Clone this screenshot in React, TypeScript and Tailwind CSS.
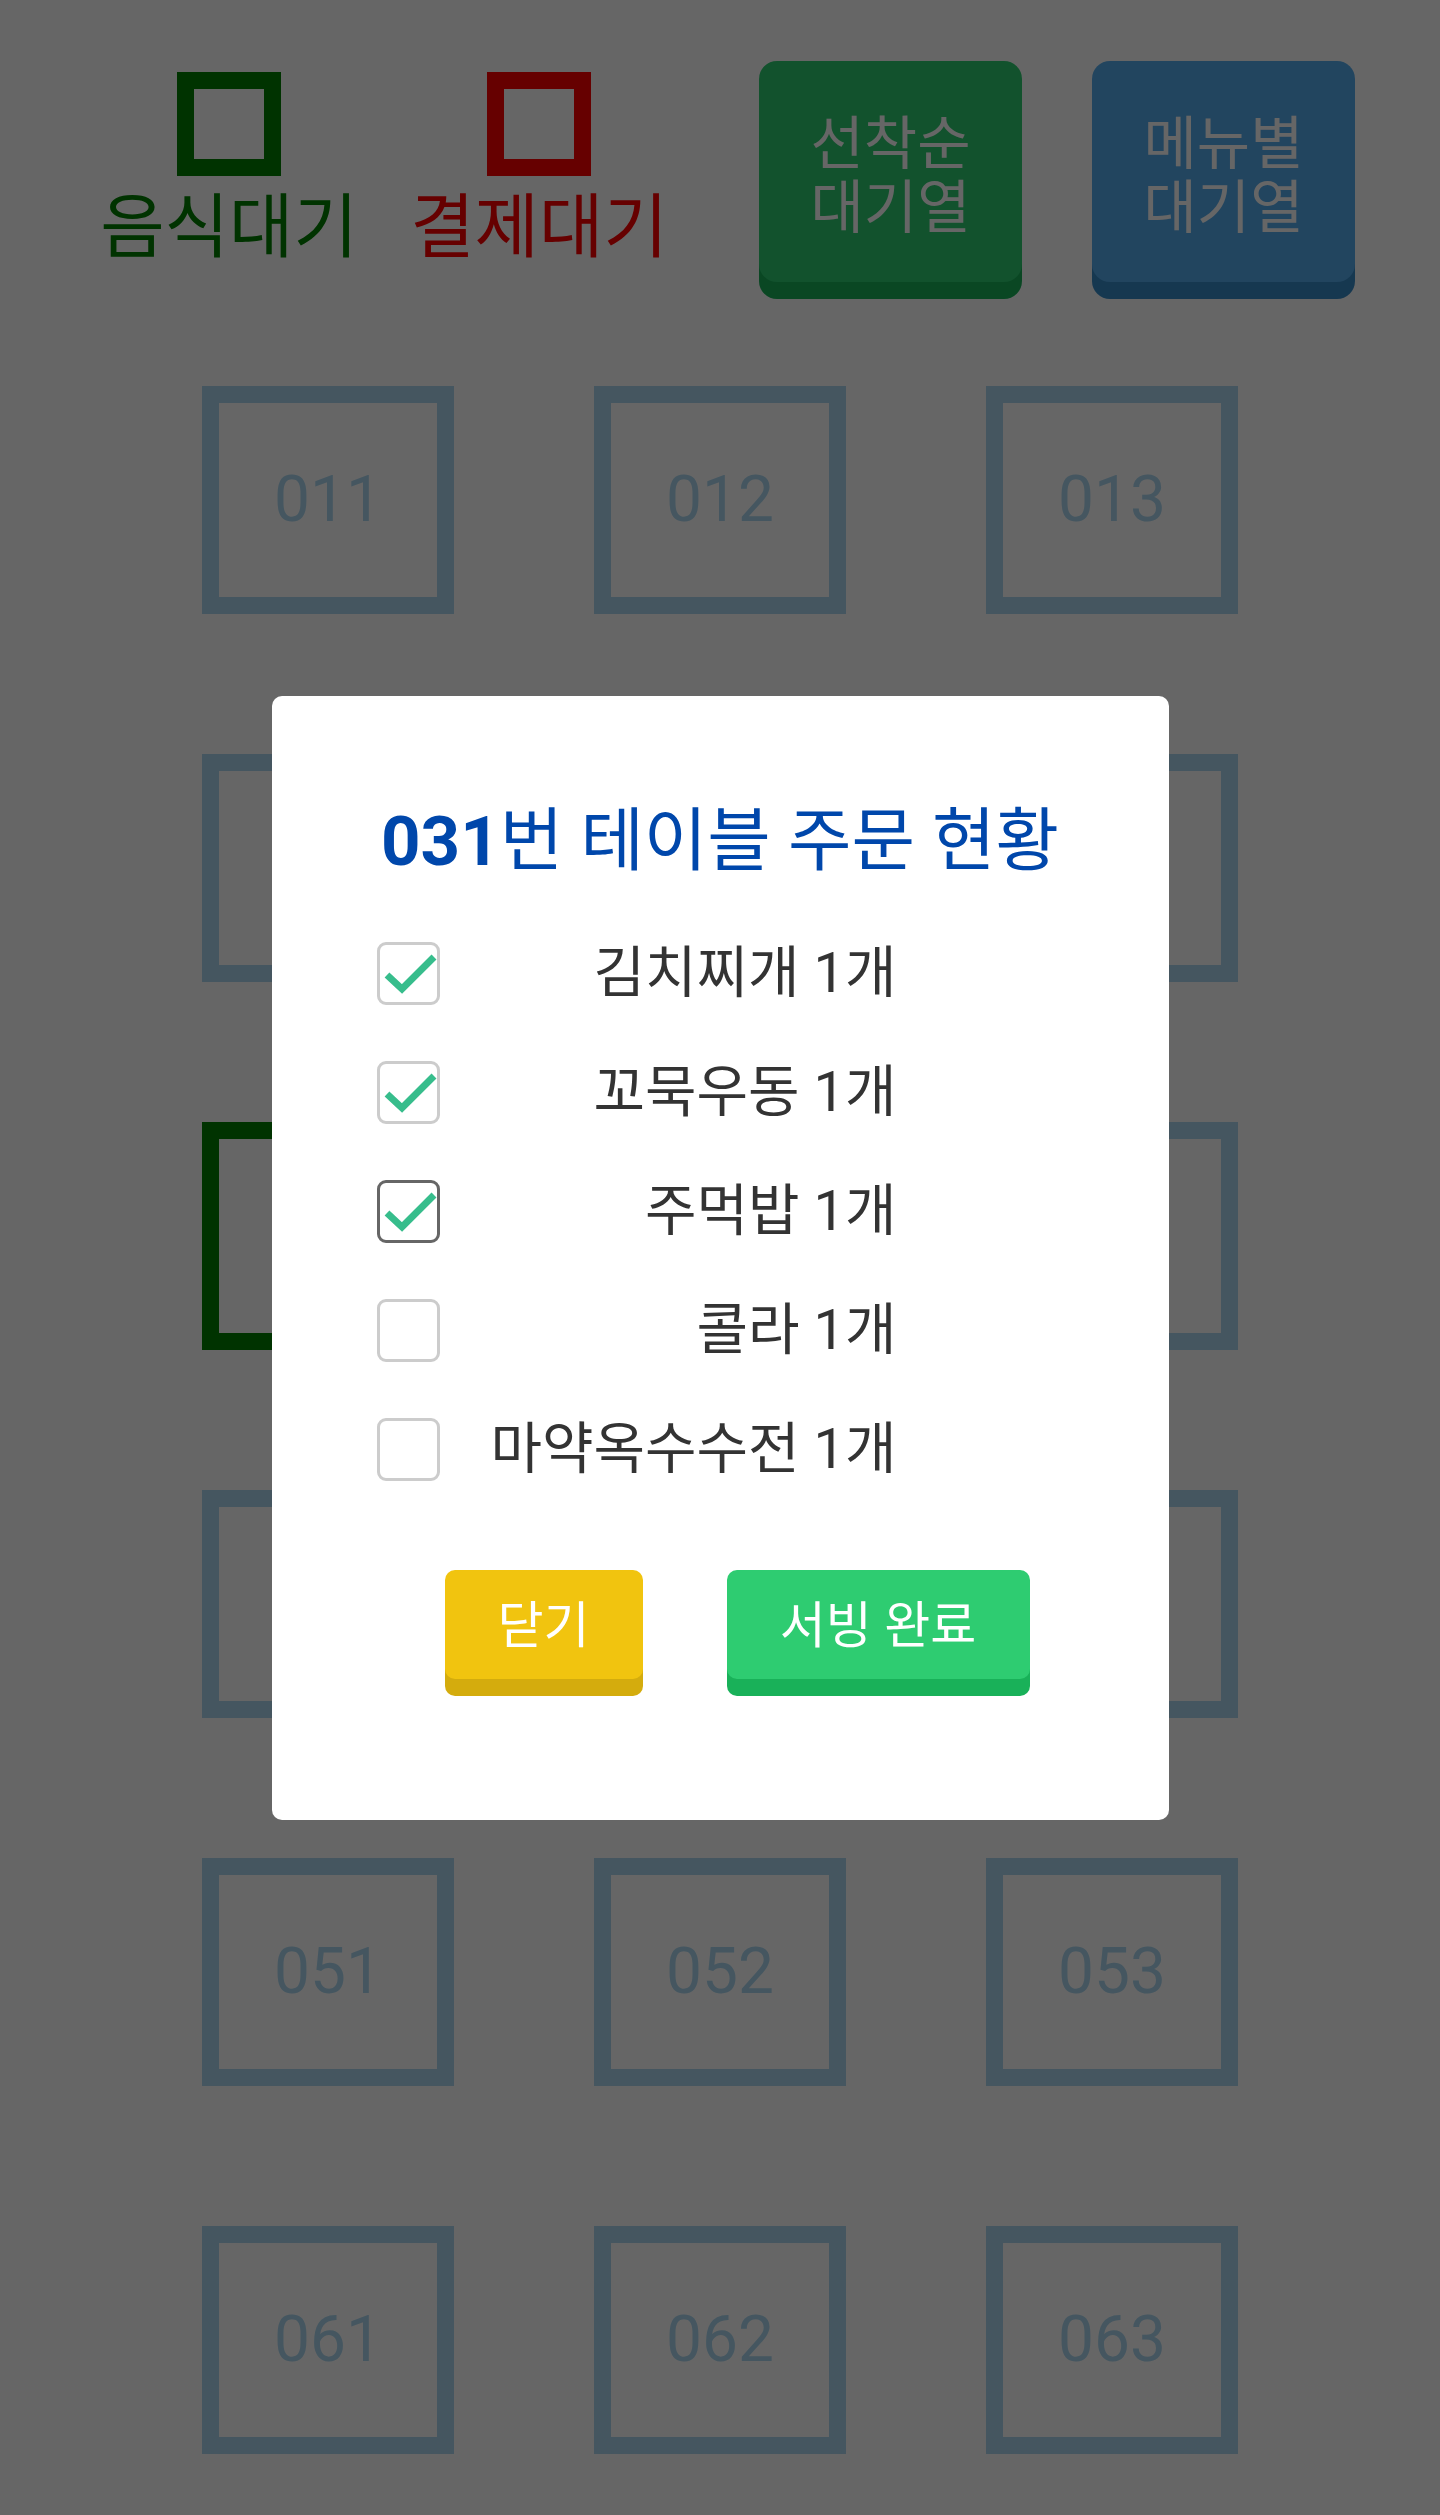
import React from 'react';

const tables = [
  ['011', '012', '013'],
  ['021', '022', '023'],
  ['031', '032', '033'],
  ['041', '042', '043'],
  ['051', '052', '053'],
  ['061', '062', '063'],
];

const orders = [
  { name: '김치찌개 1개', done: true },
  { name: '꼬묵우동 1개', done: true },
  { name: '주먹밥 1개', done: true, focused: true },
  { name: '콜라 1개', done: false },
  { name: '마약옥수수전 1개', done: false },
];

const Legend = ({ label, boxClass, textClass, className }: { label: string; boxClass: string; textClass: string; className: string }) => (
  <div className={`flex w-[256px] flex-col items-center mt-[11px] ${className}`}>
    <div className={`size-[104px] border-[17px] ${boxClass}`} />
    <div className={`mt-[17px] whitespace-nowrap text-[70px] leading-[70px] ${textClass}`}>{label}</div>
  </div>
);

const CheckBox = ({ checked, focused }: { checked: boolean; focused?: boolean }) => (
  <div
    className={`size-[63px] shrink-0 rounded-[9px] border-[3px] bg-white ${focused ? 'border-[#666666]' : 'border-[#cccccc]'}`}
  >
    {checked && (
      <svg viewBox="0 0 57 57" className="size-full">
        <polyline points="7,30 22,44 54,12" fill="none" stroke="#37bd8c" strokeWidth="7" strokeLinejoin="miter" />
      </svg>
    )}
  </div>
);

export default function App() {
  return (
    <div className="relative min-h-[2515px] bg-white pb-[61px] font-[Roboto,'Noto_Sans_CJK_KR',sans-serif]">
      {/* 상단 범례 + 대기열 버튼 */}
      <div className="flex items-start pt-[61px]">
        <Legend label="음식대기" boxClass="border-[#008000]" textClass="text-[#008000]" className="ml-[101px]" />
        <Legend label="결제대기" boxClass="border-[#ff0000]" textClass="text-[#ff0000]" className="ml-[54px]" />
        <button className="ml-[92px] flex h-[221px] w-[263px] items-center justify-center rounded-[18px] bg-[#2ecc71] pt-[8px] text-[58px] leading-[64px] text-white shadow-[0_17px_0_#19b159]">
          선착순
          <br />
          대기열
        </button>
        <button className="ml-[70px] flex h-[221px] w-[263px] items-center justify-center rounded-[18px] bg-[#55acee] pt-[8px] text-[58px] leading-[64px] text-white shadow-[0_17px_0_#398cc8]">
          메뉴별
          <br />
          대기열
        </button>
      </div>

      {/* 테이블 목록 */}
      <div className="mt-[104px] grid grid-cols-[repeat(3,252px)] justify-center gap-[140px]">
        {tables.flat().map((t) => (
          <div
            key={t}
            className={`flex h-[228px] items-center justify-center border-[17px] text-[64px] ${
              t === '031' ? 'border-[#008000] text-[#008000]' : 'border-[#acd8f0] text-[#acd8f0]'
            }`}
          >
            {t}
          </div>
        ))}
      </div>

      {/* 주문 현황 모달 */}
      <div className="fixed inset-0 flex items-center justify-center bg-black/60">
        <div className="flex h-[1124px] w-[897px] flex-col rounded-[10px] bg-white pt-[106px]">
          <h2 className="text-center text-[69px] leading-[80px] font-normal text-[#0047ab]">
            <span className="font-bold">031</span>번 테이블 주문 현황
          </h2>

          <div className="mt-[60px] flex flex-col gap-[56px] pl-[105px]">
            {orders.map((o) => (
              <label key={o.name} className="flex h-[63px] items-center">
                <CheckBox checked={o.done} focused={o.focused} />
                <span className="w-[457px] whitespace-nowrap text-right text-[56px] leading-[63px] text-[#333333]">{o.name}</span>
              </label>
            ))}
          </div>

          <div className="mt-[89px] flex gap-[84px] pl-[173px]">
            <button className="h-[109px] w-[198px] rounded-[10px] bg-[#f1c40f] pt-[4px] text-[50px] text-white shadow-[0_17px_0_#d4ac0d]">
              닫기
            </button>
            <button className="h-[109px] w-[303px] rounded-[10px] bg-[#2ecc71] pt-[4px] text-[50px] text-white shadow-[0_17px_0_#19b159]">
              서빙 완료
            </button>
          </div>
        </div>
      </div>
    </div>
  );
}
